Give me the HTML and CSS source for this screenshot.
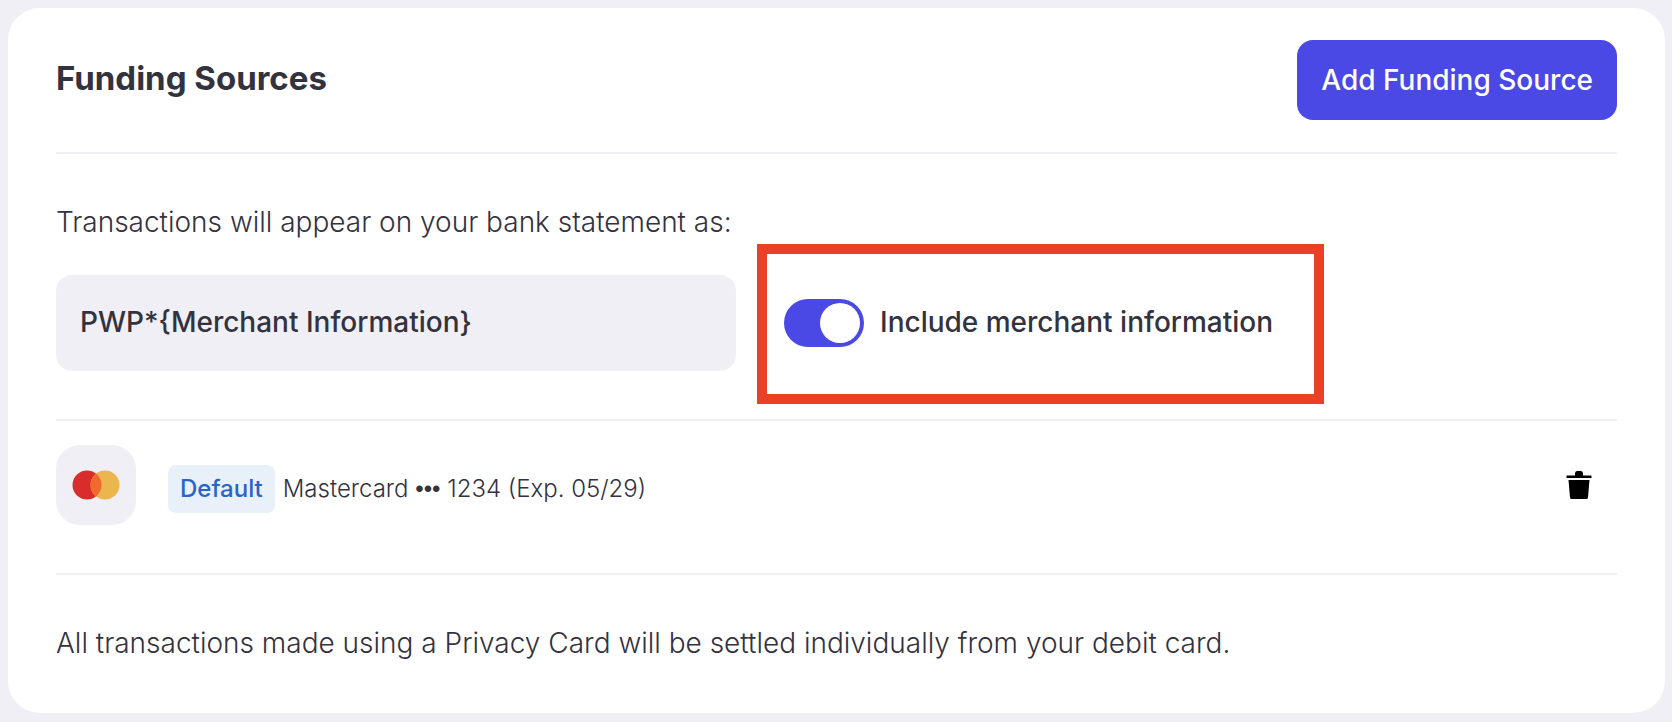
FILE: index.html
```html
<!DOCTYPE html>
<html lang="en">
<head>
	<meta charset="UTF-8">
	<meta name="viewport" content="width=device-width, initial-scale=1">
	<title>Funding Sources</title>
	<link rel="stylesheet" href="styles.css">
</head>
<body>
	<main class="card">
		<header class="card-header">
			<h1>Funding Sources</h1>
			<button type="button" class="btn-add">Add Funding Source</button>
		</header>

		<section class="statement">
			<label class="statement-label" for="txtStatement">Transactions will appear on your bank statement as:</label>
			<div class="statement-row">
				<input type="text" class="statement-input" id="txtStatement" value="PWP*{Merchant Information}" readonly>
				<div class="merchant-toggle">
					<input type="checkbox" class="switch" id="chkMerchant" checked>
					<label for="chkMerchant">Include merchant information</label>
				</div>
			</div>
		</section>

		<section class="source">
			<div class="source-logo">
				<svg width="48" height="30" viewBox="0 0 48 30" role="img" aria-label="Mastercard">
					<circle cx="15" cy="15" r="14.5" fill="#d92d2b"/>
					<circle cx="33" cy="15" r="14.5" fill="#eab64d"/>
					<path d="M24 3.6a14.5 14.5 0 0 1 0 22.8a14.5 14.5 0 0 1 0-22.8z" fill="#f06a2d"/>
				</svg>
			</div>
			<div class="source-info">
				<span class="badge">Default</span>
				<span>Mastercard <span class="dots">•••</span> 1234 (Exp. 05/29)</span>
			</div>
			<button type="button" class="btn-delete" aria-label="Delete funding source">
				<svg width="26" height="28" viewBox="0 0 26 28">
					<path d="M1 4.500h8V2.500Q9 0 11 0h4q2 0 2 2.500v2h8q.5 0 .5.500v2h-25V5q0-.5.500-.5zM2.500 9h21l-1.500 17.500q-.200 1.500-1.500 1.500h-15q-1.300 0-1.500-1.500z"/>
				</svg>
			</button>
		</section>

		<p class="note">All transactions made using a Privacy Card will be settled individually from your debit card.</p>
	</main>
</body>
</html>
```

FILE: styles.css
```css
*{
	box-sizing: border-box;
}
body{
	margin: 0;
	padding: 8px 7px 8px 8px;
	background-color: #f0eff5;
	color: #33323f;
	font-family: Inter, "Liberation Sans", sans-serif;
	font-size: 28px;
	font-weight: 300;
	line-height: 40px;
}
button, input{
	font: inherit;
	color: inherit;
}
.card{
	padding: 32px 48px 50px;
	background-color: #fff;
	border-radius: 32px;
}
.card-header{
	display: flex;
	justify-content: space-between;
	align-items: center;
	padding-bottom: 32px;
	border-bottom: 2px solid #f0eff5;
}
h1{
	margin: 0 0 4px;
	font-size: 33px;
	font-weight: 700;
}
.btn-add{
	padding: 20px 24px;
	border: none;
	border-radius: 16px;
	background-color: #4a49e6;
	color: #fff;
	font-weight: 500;
	cursor: pointer;
}
.statement{
	padding: 48px 0;
	border-bottom: 2px solid #f0eff5;
}
.statement-label{
	display: block;
	margin-bottom: 33px;
}
.statement-row{
	display: flex;
	align-items: center;
	gap: 48px;
}
.statement-input{
	width: 680px;
	height: 96px;
	padding: 0 24px 2px;
	border: none;
	border-radius: 16px;
	background-color: #f0eff5;
	font-weight: 500;
}
.merchant-toggle{
	position: relative;
	display: flex;
	align-items: center;
	gap: 16px;
	font-weight: 500;
}
.merchant-toggle label{
	padding-bottom: 2px;
}
/* highlight box around the toggle */
.merchant-toggle::after{
	content: "";
	position: absolute;
	inset: -55px -51px -57px -27px;
	border: 10px solid #ea4126;
	pointer-events: none;
}
.switch{
	appearance: none;
	width: 80px;
	height: 48px;
	margin: 0;
	padding: 4px;
	border-radius: 24px;
	background-color: #b9b8c6;
	cursor: pointer;
}
.switch::before{
	content: "";
	display: block;
	width: 40px;
	height: 40px;
	border-radius: 50%;
	background-color: #fff;
}
.switch:checked{
	background-color: #4a49e6;
}
.switch:checked::before{
	margin-left: auto;
}
.source{
	display: flex;
	align-items: flex-start;
	gap: 32px;
	padding: 24px 0 48px;
	border-bottom: 2px solid #f0eff5;
}
.source-logo{
	display: flex;
	justify-content: center;
	align-items: center;
	width: 80px;
	height: 80px;
	border-radius: 24px;
	background-color: #f0eff5;
}
.source-info{
	display: flex;
	flex: 1;
	align-items: center;
	gap: 8px;
	padding-top: 20px;
	font-size: 24px;
}
.badge{
	padding: 4px 12px;
	border-radius: 8px;
	background-color: #e8f0fa;
	color: #2b63c6;
	font-weight: 500;
}
.dots{
	font-family: "Liberation Sans", sans-serif;
}
.btn-delete{
	display: flex;
	align-items: center;
	height: 80px;
	padding: 0 25px;
	border: none;
	background: none;
	cursor: pointer;
}
.note{
	margin: 48px 0 0;
}
```
